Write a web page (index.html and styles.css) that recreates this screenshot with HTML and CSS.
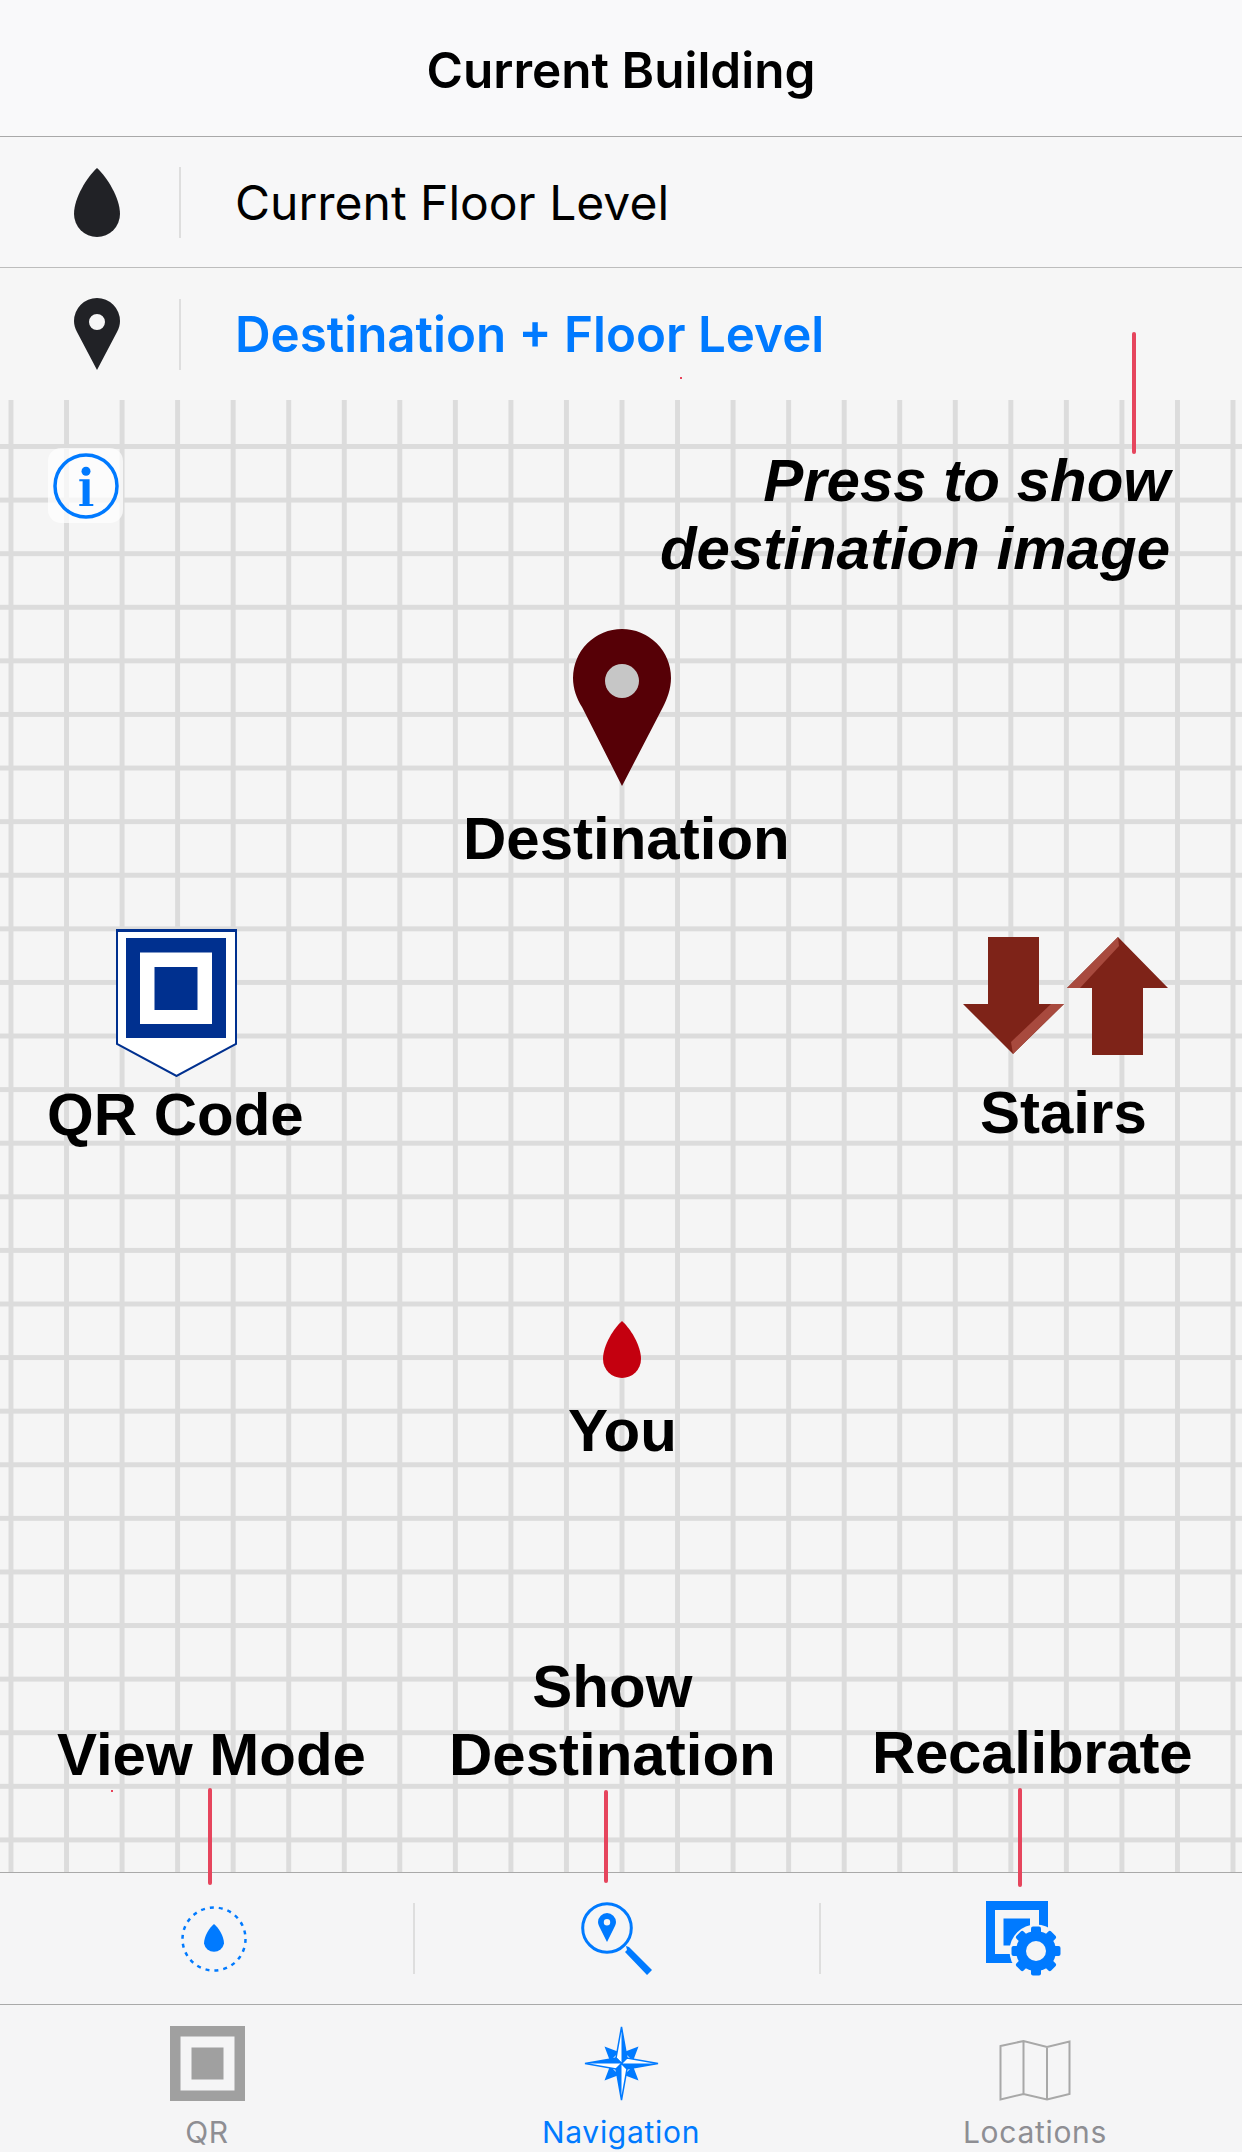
FILE: index.html
```html
<!DOCTYPE html>
<html>
<head>
    <title>Navigation</title>
    <link rel="stylesheet" href="styles.css">
</head>
<body>
    <div class="screen">
        <h1 class="title">Current Building</h1>

        <div class="row">
            <div class="row-icon">
                <svg width="46" height="69" viewBox="0 0 46 69"><path class="dark" d="M23 0C33 9 46 30 46 46A23 23 0 0 1 0 46C0 30 13 9 23 0Z"/></svg>
            </div>
            <div class="row-text">Current Floor Level</div>
        </div>
        <div class="row row-last">
            <div class="row-icon">
                <svg width="46" height="72" viewBox="0 0 46 72"><path class="dark" fill-rule="evenodd" d="M23 0A23 23 0 0 1 46 23C46 27 45 30 43 34L23 72L3 34C1 30 0 27 0 23A23 23 0 0 1 23 0ZM23 16A8 8 0 1 0 23 32A8 8 0 1 0 23 16Z"/></svg>
            </div>
            <div class="row-text row-blue">Destination + Floor Level</div>
        </div>

        <div class="map">
            <div class="info-btn">
                <svg width="68" height="68" viewBox="0 0 68 68"><circle cx="34" cy="34" r="31" fill="none" stroke="#007aff" stroke-width="3.5"/><circle cx="34" cy="19.300" r="4.500" fill="#007aff"/><path fill="#007aff" d="M27.300 27.300H37.600V52H41.300V54H27.300V52H30.600V29.300H27.300Z"/></svg>
            </div>

            <div class="note">Press to show<br>destination image</div>

            <svg class="pin" width="98" height="157" viewBox="0 0 98 157"><path fill="#560006" d="M49 0A49 49 0 0 1 98 49C98 60 94 70 90 78L49 157L9 78C4 70 0 60 0 49A49 49 0 0 1 49 0Z"/><circle cx="49" cy="52" r="17" fill="#c6c6c6"/></svg>
            <div class="label label-dest">Destination</div>

            <svg class="qr" width="121" height="148" viewBox="0 0 121 148"><path fill="#fff" stroke="#00308f" stroke-width="2" d="M1 1.500H120V115L60.500 147L1 115Z"/><path fill="#00308f" d="M0 0H121V3H0Z"/><path fill="#00308f" fill-rule="evenodd" d="M10 9H110V109H10ZM24 23.500V95H96V23.500Z"/><rect x="38.500" y="38" width="43" height="43" fill="#00308f"/></svg>
            <div class="label label-qr">QR Code</div>

            <svg class="stairs" width="206" height="118" viewBox="0 0 206 118">
                <path fill="#7e2318" d="M25 0H76V67H101L50 117L0 67H25Z"/>
                <path fill="#a84a3e" d="M88 67H101L50 117L48 105Z"/>
                <path fill="#7e2318" d="M155 0L205 51H180V118H129V51H104Z"/>
                <path fill="#a84a3e" d="M104 51L155 0L156 9L117 51Z"/>
            </svg>
            <div class="label label-stairs">Stairs</div>

            <svg class="you" width="38" height="57" viewBox="0 0 38 57"><path fill="#c4000f" d="M19 0C27 7 38 24 38 38A19 19 0 0 1 0 38C0 24 11 7 19 0Z"/></svg>
            <div class="label label-you">You</div>

            <div class="label label-show">Show<br>Destination</div>
            <div class="label label-view">View Mode</div>
            <div class="label label-recal">Recalibrate</div>
        </div>

        <div class="toolbar">
            <div class="tool">
                <svg class="tool-view" width="66" height="66" viewBox="0 0 66 66"><circle cx="33" cy="33" r="31.500" fill="none" stroke="#007aff" stroke-width="2.500" stroke-dasharray="4 5"/><path fill="#007aff" d="M33 18C37 21 43 30 43 37.500A10.200 10.200 0 0 1 23 37.500C23 30 29 21 33 18Z"/></svg>
            </div>
            <div class="tool">
                <svg width="72" height="74" viewBox="0 0 72 74"><circle cx="26" cy="26" r="24.300" fill="none" stroke="#007aff" stroke-width="3"/><path fill="#007aff" fill-rule="evenodd" d="M26 11A9.300 9.300 0 0 1 35 20C35 22 34 24 33 26L26 40L19 26C18 24 17 22 17 20A9.300 9.300 0 0 1 26 11ZM26 17A3.200 3.200 0 1 0 26 23.400A3.200 3.200 0 1 0 26 17Z"/><path fill="#007aff" d="M45 44L48 45L71 68L66 73L44 50L46 48Z"/></svg>
            </div>
            <div class="tool tool-end">
                <svg class="tool-recal" width="76" height="76" viewBox="0 0 76 76">
                    <path fill="#007aff" fill-rule="evenodd" d="M0 0H62V62H0ZM9 9V53H53V9Z"/>
                    <rect x="17.500" y="17.500" width="26.500" height="27" fill="#007aff"/>
                    <circle cx="50" cy="50" r="26.500" fill="#f5f5f6"/>
                    <g fill="#007aff">
                        <circle cx="50" cy="50" r="20"/>
                        <rect x="45" y="25.500" width="10" height="49" rx="2"/>
                        <rect x="45" y="25.500" width="10" height="49" rx="2" transform="rotate(45 50 50)"/>
                        <rect x="45" y="25.500" width="10" height="49" rx="2" transform="rotate(90 50 50)"/>
                        <rect x="45" y="25.500" width="10" height="49" rx="2" transform="rotate(135 50 50)"/>
                    </g>
                    <circle cx="50" cy="50" r="10" fill="#f5f5f6"/>
                </svg>
            </div>
        </div>

        <div class="tabs">
            <div class="tab">
                <svg width="75" height="75" viewBox="0 0 75 75"><path fill="#a0a0a0" fill-rule="evenodd" d="M0 0H75V75H0ZM10.500 10.500V64.500H64.500V10.500Z"/><rect x="21.500" y="21.500" width="32" height="32" fill="#a0a0a0"/></svg>
                <span class="tab-label">QR</span>
            </div>
            <div class="tab tab-on">
                <svg width="75" height="75" viewBox="0 0 75 75">
                    <path fill="#007aff" d="M20.500 20.500L35 26L26 35ZM54.500 20.500L49 35L40 26ZM54.500 54.500L40 49L49 40ZM20.500 54.500L26 40L35 49Z"/>
                    <g fill="#fff" stroke="#007aff" stroke-width="1.500" stroke-linejoin="miter">
                        <path d="M37.500 1L43 32L37.500 37.500L32 32Z"/>
                        <path d="M74 37.500L43 43L37.500 37.500L43 32Z"/>
                        <path d="M37.500 74L32 43L37.500 37.500L43 43Z"/>
                        <path d="M1 37.500L32 32L37.500 37.500L32 43Z"/>
                    </g>
                    <path fill="#007aff" d="M37.500 1L43 32L37.500 37.500ZM74 37.500L43 43L37.500 37.500ZM37.500 74L32 43L37.500 37.500ZM1 37.500L32 32L37.500 37.500Z"/>
                </svg>
                <span class="tab-label">Navigation</span>
            </div>
            <div class="tab">
                <svg width="72" height="62" viewBox="0 0 72 62"><path fill="none" stroke="#a8a8a8" stroke-width="2" d="M1.500 7L24.500 2L48 8L70.500 2.500V55L48 60.500L24.500 55L1.500 60.500ZM24.500 2V55M48 8V60.500"/></svg>
                <span class="tab-label">Locations</span>
            </div>
        </div>

        <div class="mark mark-top"></div>
        <div class="mark mark-view"></div>
        <div class="mark mark-show"></div>
        <div class="mark mark-recal"></div>
        <div class="speck speck-a"></div>
        <div class="speck speck-b"></div>
    </div>
</body>
</html>
```

FILE: styles.css
```css
body {
    margin: 0;
    padding: 0;
    background-color: #f5f5f6;
    font-family: Inter, "Liberation Sans", sans-serif;
}

.screen {
    position: relative;
    width: 1242px;
    height: 2152px;
    overflow: hidden;
}

.title {
    margin: 0;
    height: 136px;
    line-height: 140px;
    font-size: 49.500px;
    font-weight: 600;
    text-align: center;
    color: #000;
    background-color: #f9f9fa;
    border-bottom: 1px solid #a9a9a9;
}

.row {
    display: flex;
    align-items: center;
    height: 130px;
    background-color: #f7f7f8;
    border-bottom: 1px solid #bdbdbd;
}

.row-last {
    height: 132px;
    border-bottom: 0;
    background-color: #f6f6f6;
}

.row-icon {
    display: flex;
    justify-content: center;
    align-items: center;
    box-sizing: border-box;
    width: 181px;
    height: 71px;
    padding-left: 14px;
    border-right: 2px solid #dedede;
}

.dark {
    fill: #212226;
}

.row-text {
    margin-left: 54px;
    font-size: 48px;
    color: #000;
}

.row-blue {
    font-size: 49.300px;
    font-weight: 600;
    color: #007aff;
}

.map {
    position: relative;
    height: 1472px;
    background-color: #f5f5f5;
    background-image:
        linear-gradient(90deg, #dcdcdc 5px, transparent 5px),
        linear-gradient(#dcdcdc 5px, transparent 5px);
    background-size: 55.55px 53.6px;
    background-position: 8.5px 44px;
}

.info-btn {
    position: absolute;
    left: 48px;
    top: 48px;
    display: flex;
    justify-content: center;
    align-items: center;
    width: 75px;
    height: 75px;
    border-radius: 13px;
    background-color: rgba(255, 255, 255, 0.7);
}

.label,
.note {
    position: absolute;
    font-family: "Liberation Sans", Arial, sans-serif;
    font-weight: bold;
    font-size: 60px;
    line-height: 67px;
    color: #000;
    white-space: nowrap;
}

.note {
    right: 72px;
    top: 47px;
    font-style: italic;
    line-height: 68px;
    text-align: right;
}

.pin { position: absolute; left: 573px; top: 229px; }
.qr { position: absolute; left: 116px; top: 529px; }
.stairs { position: absolute; left: 963px; top: 537px; }
.you { position: absolute; left: 603px; top: 921px; }

.label-dest { left: 463px; top: 405px; }
.label-qr { left: 47px; top: 681px; }
.label-stairs { left: 980px; top: 679px; }
.label-you { left: 568px; top: 997px; }
.label-show { left: 449px; top: 1253px; line-height: 68px; text-align: center; }
.label-view { left: 57px; top: 1321px; }
.label-recal { left: 872px; top: 1319px; letter-spacing: -0.3px; }

.toolbar {
    display: grid;
    grid-template-columns: 415px 406px 1fr;
    align-items: center;
    height: 131px;
    background-color: #f5f5f6;
    border-top: 1px solid #a9a9a9;
    border-bottom: 1px solid #a9a9a9;
}

.tool {
    display: flex;
    justify-content: center;
    align-items: center;
    box-sizing: border-box;
    height: 71px;
    border-right: 2px solid #dedede;
}

.tool-end {
    border-right: 0;
}

.tool-view {
    margin-left: 14px;
}

.tool-recal {
    margin-right: 16px;
}

.tabs {
    display: flex;
    height: 147px;
    background-color: #f5f5f6;
}

.tab {
    flex: 1;
    display: flex;
    flex-direction: column;
    align-items: center;
    justify-content: flex-end;
    gap: 13px;
    padding-bottom: 2px;
}

.tab-label {
    font-size: 30px;
    line-height: 36px;
    letter-spacing: 0.7px;
    color: #8e8e93;
}

.tab-on .tab-label {
    color: #007aff;
}

.mark {
    position: absolute;
    width: 4px;
    border-radius: 2px;
    background-color: #e6455d;
}

.mark-top { left: 1132px; top: 332px; height: 122px; }
.mark-view { left: 208px; top: 1788px; height: 97px; }
.mark-show { left: 604px; top: 1790px; height: 93px; }
.mark-recal { left: 1018px; top: 1788px; height: 99px; }

.speck {
    position: absolute;
    width: 2px;
    height: 2px;
    background-color: #e8435a;
}

.speck-a { left: 680px; top: 377px; }
.speck-b { left: 111px; top: 1790px; }
```
